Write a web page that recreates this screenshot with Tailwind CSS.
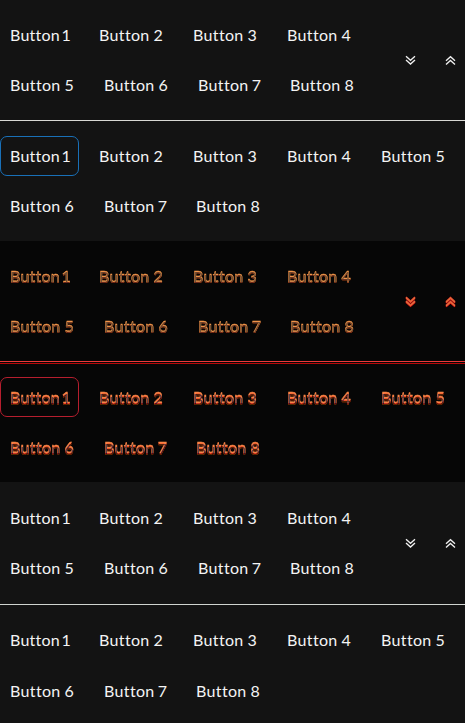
<!DOCTYPE html>
<html lang="en"><head><meta charset="utf-8"><title>Button groups</title>
<script src="https://cdn.jsdelivr.net/npm/@tailwindcss/browser@4"></script></head>
<body class="w-[465px] h-[723px] overflow-hidden bg-[#131313] text-[#f4f4f4] font-[Lato,sans-serif] text-[16px] leading-[40px]">
<main id="app" class="flex flex-col"></main>
<script>
const label = (n, mode) => {
  const t = 'Button ' + n;
  if (!mode) return t;
  const ghost = mode === 1
    ? 'text-[#f09448] before:content-[attr(data-t)] before:absolute before:left-0 before:top-px before:text-[#804010] before:mix-blend-difference [text-shadow:0_1px_#e85820] [-webkit-text-stroke:0.4px_#f09448] before:[-webkit-text-stroke:0px_#804010] before:[text-shadow:none]'
    : 'text-[#f88446] before:content-[attr(data-t)] before:absolute before:left-0 before:top-[2px] before:text-[#a04000] before:mix-blend-difference [text-shadow:0_1px_#f02818,0_2px_#d02000bb] [-webkit-text-stroke:0.4px_#f88446] before:[-webkit-text-stroke:0px_#a04000] before:[text-shadow:none]';
  return `<span class="relative isolate inline-block ${ghost}" data-t="${t}">${t}</span>`;
};
const row = (nums, mode, ring) => '<div class="flex gap-[10px] h-10">' + nums.map(n =>
  `<button class="h-10 rounded-[7px] border pl-[9px] text-left whitespace-nowrap leading-[38px] ${n === 1 ? 'w-[79px] tracking-[0.25px] [word-spacing:-2.8px]' : n === 7 ? 'w-[82px] tracking-[0.35px] [word-spacing:-1.3px]' : 'w-[84px] tracking-[0.35px] [word-spacing:-0.6px]'} ${n === 1 && ring ? ring : 'border-transparent'}">${label(n, mode)}</button>`).join('') + '</div>';
const icon = (d, diff) => `<svg class="w-[10px] h-[11px] overflow-visible" viewBox="0 0 10 11" fill="none" stroke-width="1.3">
  ${diff ? `<path transform="translate(0 1)" stroke="#e81818" stroke-width="1.8" d="${d}"/><path stroke="#ef4330" stroke-width="1.8" d="${d}"/><path transform="translate(0 .5)" stroke="#d68b43" stroke-width="1" d="${d}"/>` : `<path stroke="#f0f0f0" d="${d}"/>`}</svg>`;
const down = 'M1 1.2L5.5 5.3L10 1.2M1 5L5.5 9.1L10 5', up = 'M1 5.8L5.5 1.7L10 5.8M1 9.6L5.5 5.5L10 9.6';
const split = (mode) => `<div class="flex justify-between pr-[10px]"><div class="flex flex-col gap-[10px]">${row([1,2,3,4], mode)}${row([5,6,7,8], mode)}</div><div class="flex items-center gap-[30px]">${icon(down, mode)}${icon(up, mode)}</div></div>`;
const wrap = (mode, ring, gap) => `<div class="flex flex-col ${gap}">${row([1,2,3,4,5], mode, ring)}${row([6,7,8], mode)}</div>`;
document.getElementById('app').innerHTML =
 `<section class="h-[241px] pt-[15px]">${split(0)}<hr class="mt-[15px] border-t border-[#d8d8d4] mb-[15px]">${wrap(0,'border-[#1970b8]','gap-[10px]')}</section>
  <section class="h-[241px] pt-[15px] bg-[#060606]">${split(1)}<div class="mt-[15px] mb-[13px] h-[3px] border-t border-b border-t-[#e83a3a] border-b-[#b80808]"></div>${wrap(2,'border-[#b51e2e]','gap-[10px]')}</section>
  <section class="h-[241px] pt-4">${split(0)}<hr class="mt-4 border-t border-[#d0d4d0] mb-[15px]">${wrap(0,'','gap-[11px]')}</section>`;
</script></body></html>
